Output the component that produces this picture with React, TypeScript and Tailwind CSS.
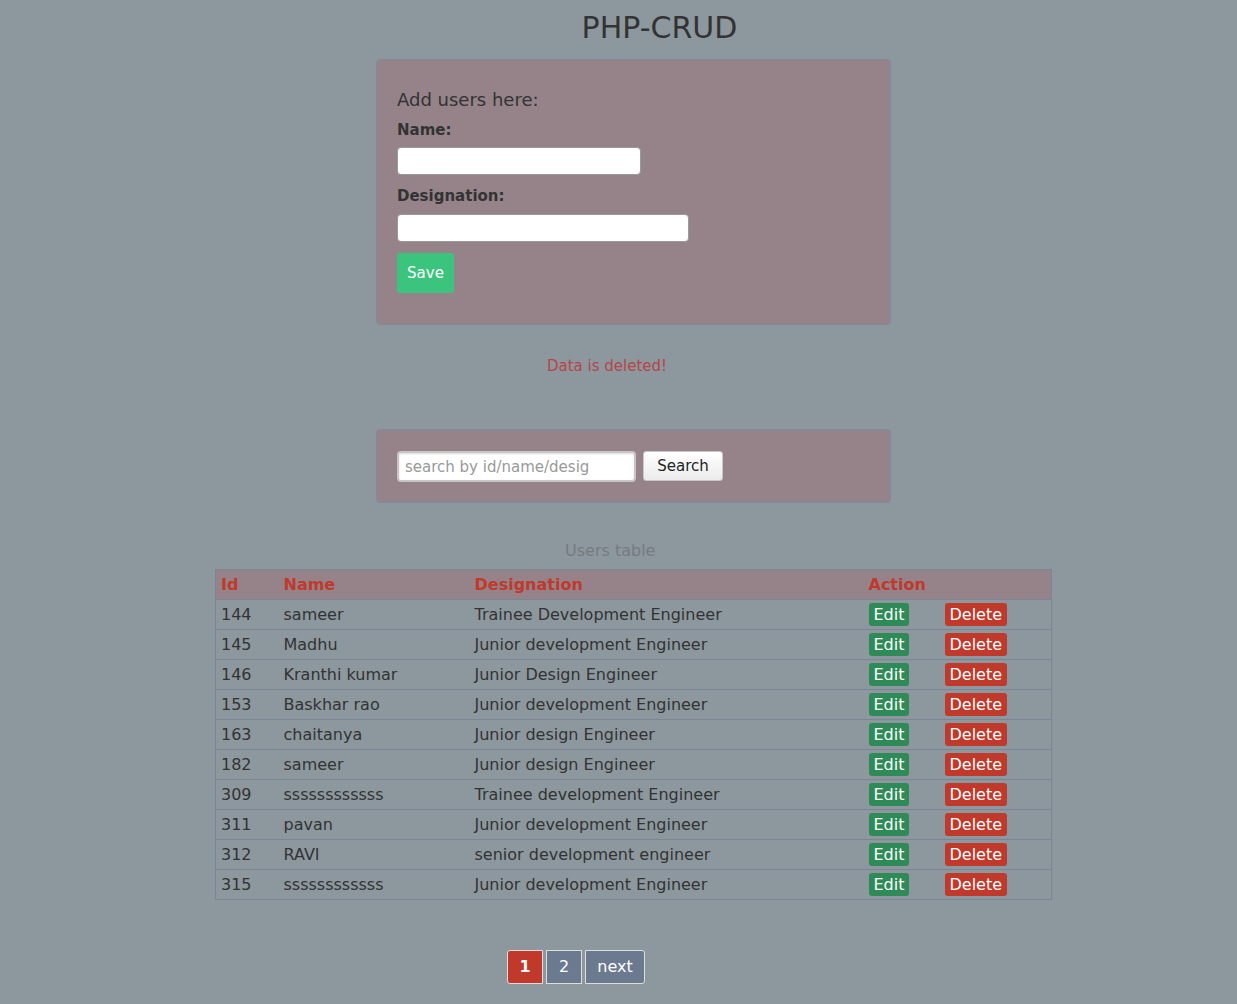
const users = [
  { id: 144, name: 'sameer', desig: 'Trainee Development Engineer' },
  { id: 145, name: 'Madhu', desig: 'Junior development Engineer' },
  { id: 146, name: 'Kranthi kumar', desig: 'Junior Design Engineer' },
  { id: 153, name: 'Baskhar rao', desig: 'Junior development Engineer' },
  { id: 163, name: 'chaitanya', desig: 'Junior design Engineer' },
  { id: 182, name: 'sameer', desig: 'Junior design Engineer' },
  { id: 309, name: 'ssssssssssss', desig: 'Trainee development Engineer' },
  { id: 311, name: 'pavan', desig: 'Junior development Engineer' },
  { id: 312, name: 'RAVI', desig: 'senior development engineer' },
  { id: 315, name: 'ssssssssssss', desig: 'Junior development Engineer' },
];

export default function App() {
  return (
    <div
      className="min-h-screen bg-[#8d989e] text-[#333] pb-[20px]"
      style={{ fontFamily: '"DejaVu Sans", "Liberation Sans", sans-serif' }}
    >
      {/* Title */}
      <h1 className="pt-[10px] pl-[82px] text-center text-[30px] leading-[35px] font-normal">PHP-CRUD</h1>

      {/* Add form */}
      <div className="ml-[376px] mt-[14px] h-[266px] w-[515px] rounded-[4px] border border-[#7d8aa4] bg-[#958389] px-[20px] pt-[29px]">
        <p className="text-[18px] leading-[21px]">Add users here:</p>
        <label className="mt-[11px] block text-[15px] font-bold leading-[18px]">Name:</label>
        <input className="mt-[8px] block h-[28px] w-[244px] rounded-[4px] border border-[#999] bg-white" />
        <label className="mt-[12px] block text-[15px] font-bold leading-[18px]">Designation:</label>
        <input className="mt-[9px] block h-[28px] w-[292px] rounded-[4px] border border-[#999] bg-white" />
        <button className="mt-[11px] block h-[40px] w-[57px] rounded-[3px] bg-[#3ac47d] text-[15px] text-white">
          Save
        </button>
      </div>

      <p className="ml-[547px] mt-[32px] text-[15px] leading-[18px] text-[#b5454a]">Data is deleted!</p>

      {/* Search */}
      <div className="ml-[376px] mt-[54px] flex h-[74px] w-[515px] items-start gap-[7px] rounded-[4px] border border-[#7d8aa4] bg-[#958389] px-[20px] pt-[21px]">
        <input
          placeholder="search by id/name/desig"
          className="h-[31px] w-[239px] rounded-[4px] border-2 border-[#c9c4c6] bg-white px-[6px] text-[15px] shadow-[inset_0_1px_2px_rgba(0,0,0,0.15)] placeholder:text-[#999]"
        />
        <button className="h-[30px] w-[80px] rounded-[3px] border border-[#c8c8c8] bg-gradient-to-b from-white to-[#ebebeb] text-[15px] text-[#222]">
          Search
        </button>
      </div>

      <p className="ml-[565px] mt-[38px] text-[16px] leading-[19px] text-[#767b80]">Users table</p>

      {/* Table */}
      <table className="ml-[215px] mt-[9px] w-[837px] border-collapse border border-[#7a8698] text-[16px]">
        <thead>
          <tr className="h-[30px] bg-[#958389] text-left font-bold text-[#c0392b]">
            <th className="w-[63px] pl-[5px]">Id</th>
            <th className="w-[191px] pl-[5px]">Name</th>
            <th className="w-[394px] pl-[5px]">Designation</th>
            <th className="w-[76px] pl-[5px]">Action</th>
            <th className="pl-[5px]"></th>
          </tr>
        </thead>
        <tbody>
          {users.map((u) => (
            <tr key={u.id} className="h-[30px] border-t border-[#7a8698]">
              <td className="pl-[5px]">{u.id}</td>
              <td className="pl-[5px]">{u.name}</td>
              <td className="pl-[5px]">{u.desig}</td>
              <td className="pl-[5px]">
                <span className="inline-block rounded-[3px] bg-[#2e8b57] px-[5px] py-[2px] leading-[19px] text-white">Edit</span>
              </td>
              <td className="pl-[5px]">
                <span className="inline-block rounded-[3px] bg-[#c0392b] px-[5px] py-[2px] leading-[19px] text-white">Delete</span>
              </td>
            </tr>
          ))}
        </tbody>
      </table>

      {/* Pagination */}
      <div className="ml-[507px] mt-[50px] flex gap-[3px] text-[16px] text-white">
        <span className="flex h-[34px] w-[36px] items-center justify-center rounded-l-[3px] border border-[#ddd] bg-[#c0392b] font-bold">1</span>
        <span className="flex h-[34px] w-[36px] items-center justify-center border border-[#ddd] bg-[#6c7a90]">2</span>
        <span className="flex h-[34px] w-[60px] items-center justify-center rounded-r-[3px] border border-[#ddd] bg-[#6c7a90]">next</span>
      </div>
    </div>
  );
}
